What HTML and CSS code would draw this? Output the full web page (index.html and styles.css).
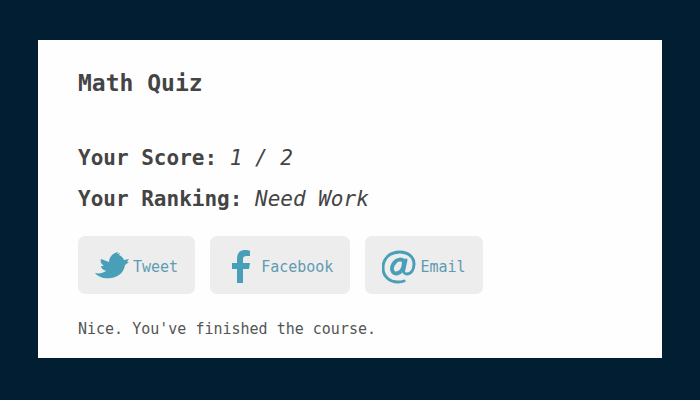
FILE: index.html
```
<!DOCTYPE html>
<html lang="en">
<head>
  <meta charset="UTF-8">
  <meta name="viewport" content="width=device-width, initial-scale=1.0">
  <title>Math Quiz</title>
  <link rel="stylesheet" href="styles.css">
</head>
<body>
  <main class="quiz">
    <h1>Math Quiz</h1>

    <!-- Results -->
    <h2>Your Score: <em>1 / 2</em></h2>
    <h2>Your Ranking: <em>Need Work</em></h2>

    <!-- Share buttons -->
    <div class="share">
      <button type="button">
        <svg class="icon" width="36" height="34" viewBox="0 0 36 34" aria-hidden="true">
          <path d="M0 23C4 24 8 23 11 21C8 20 6 18 6 16L9 16C6 14 5 12 6 9C9 10 11 11 14 12C14 7 18 3 23 2L22 4L25 3L24 5C27 6 28 8 29 10L34 9L32 12L34 12L30 15C29 22 24 27 16 28C9 29 3 27 0 23Z"/>
        </svg>
        Tweet
      </button>
      <button type="button">
        <svg class="icon" width="32" height="34" viewBox="0 0 32 34" aria-hidden="true">
          <path d="M10 33V19H5V13H10V9C10 3 13 0 18 0C20 0 22 0 23 1V6H20C17 6 16 7 16 9V13H23L22 19H16V33Z"/>
        </svg>
        Facebook
      </button>
      <button type="button">
        <svg class="icon" width="36" height="34" viewBox="0 0 36 34" aria-hidden="true">
          <path class="line" d="M22 31C20 32 18 32 16 32C7 32 1 26 1 18C1 8 8 2 18 2C26 2 32 7 32 14C32 20 29 24 25 24C22 24 21 22 22 19L24 10"/>
          <path class="line bold" d="M22 11C20 9 15 9 13 12C10 15 9 19 11 22C13 25 18 23 20 20C22 17 22 14 22 11Z"/>
        </svg>
        Email
      </button>
    </div>

    <p>Nice. You've finished the course.</p>
  </main>
</body>
</html>
```
FILE: styles.css
```
body {
  margin: 0;
  padding: 40px 38px;
  background-color: #021e33;
  color: #444;
  font-family: "DejaVu Sans Mono", monospace;
}
.quiz {
  padding: 28px 40px 18px;
  background-color: #fefefe;
}
h1 {
  margin: 0 0 45px;
  font-size: 23px;
  line-height: 30px;
}
h2 {
  margin: 0 0 11px;
  font-size: 21px;
  line-height: 30px;
}
h2 em {
  font-weight: normal;
}
.share {
  display: flex;
  flex-wrap: wrap;
  gap: 15px;
  margin: 22px 0 24px;
}
button {
  display: flex;
  align-items: center;
  gap: 2px;
  height: 58px;
  padding: 4px 17px 0;
  background-color: #ededed;
  color: #5f9bb1;
  border: none;
  border-radius: 7px;
  font-family: inherit;
  font-size: 15px;
  cursor: pointer;
}
button:hover {
  background-color: #e0e0e0;
}
.icon {
  fill: #4a9fb8;
}
.line {
  fill: none;
  stroke: #4a9fb8;
  stroke-width: 3;
  stroke-linecap: round;
}
.bold {
  stroke-width: 4;
}
p {
  margin: 0;
  color: #555;
  font-size: 15px;
  line-height: 22px;
}
```
